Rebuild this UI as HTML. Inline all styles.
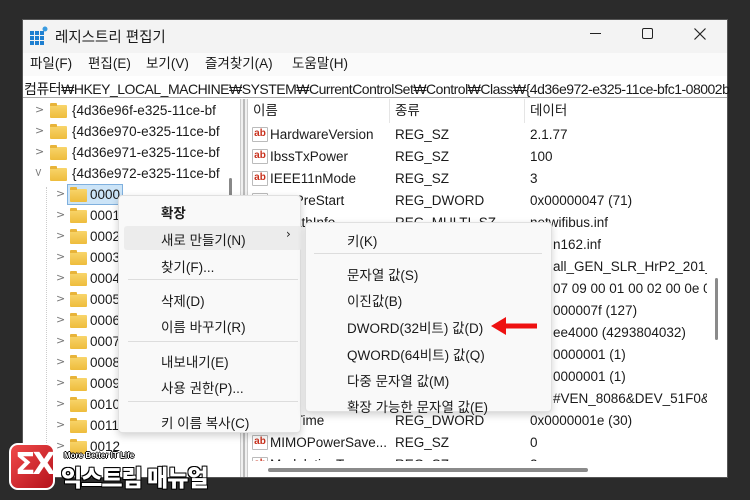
<!DOCTYPE html>
<html><head><meta charset="utf-8"><style>
*{margin:0;padding:0;box-sizing:border-box}
body{width:750px;height:500px;background:#2b2b2b;position:relative;overflow:hidden;font-family:"Liberation Sans","Noto Sans CJK KR",sans-serif;color:#1a1a1a}
.a{position:absolute;white-space:nowrap}
.t{font-size:13.5px;line-height:16px}
.fold{position:absolute;width:17px;height:13px;background:linear-gradient(#f8d56b,#eebc3c);border-radius:1px}
.fold:before{content:"";position:absolute;left:0;top:-2px;width:7px;height:3px;background:#e8b43a;border-radius:1px 1px 0 0}
.chev{position:absolute;font-size:11px;color:#777;font-family:"DejaVu Sans",sans-serif}
.ab{position:absolute;width:16px;height:15px;border:1px solid #bbb;background:#fff;color:#c8301c;font-size:10px;font-weight:bold;line-height:11px;text-align:center;border-radius:1px}
.ab.d{color:#2a4fb5;font-size:8px}
.m{position:absolute;font-size:13.5px;white-space:nowrap}
.sep{position:absolute;height:1px;background:#ddd}
</style></head><body>
<div class="a" style="left:22px;top:19px;width:706px;height:459px;background:#fff;border:1px solid #555"></div>
<div class="a" style="left:23px;top:20px;width:704px;height:33px;background:#f3f3f3"></div>
<div class="a" style="left:23px;top:53px;width:704px;height:23px;background:#fafafa"></div>
<svg class="a" style="left:30px;top:26px" width="18" height="20" viewBox="0 0 18 20"><g fill="#1e7fd0"><rect x="0" y="5" width="4" height="4"/><rect x="5" y="5" width="4" height="4"/><rect x="10" y="5" width="4" height="4"/><rect x="0" y="10" width="4" height="4"/><rect x="5" y="10" width="4" height="4"/><rect x="10" y="10" width="4" height="4"/><rect x="0" y="15" width="4" height="4"/><rect x="5" y="15" width="4" height="4"/><rect x="10" y="15" width="4" height="4"/></g><circle cx="15" cy="3" r="2.5" fill="#3a9be0"/></svg>
<div class="a" style="left:55px;top:26px;font-size:14.5px">레지스트리 편집기</div>
<div class="a" style="left:590px;top:33px;width:11px;height:1px;background:#222"></div>
<div class="a" style="left:642px;top:28px;width:11px;height:11px;border:1.3px solid #222;border-radius:2px"></div>
<svg class="a" style="left:694px;top:28px" width="12" height="12"><path d="M0.5 0.5L11.5 11.5M11.5 0.5L0.5 11.5" stroke="#222" stroke-width="1.2"/></svg>
<div class="a t" style="left:30px;top:56px">파일(F)</div>
<div class="a t" style="left:88px;top:56px">편집(E)</div>
<div class="a t" style="left:146px;top:56px">보기(V)</div>
<div class="a t" style="left:205px;top:56px">즐겨찾기(A)</div>
<div class="a t" style="left:292px;top:56px">도움말(H)</div>
<div class="a" style="left:23px;top:77px;width:704px;height:21px;border-bottom:1px solid #aaa;background:#fff"></div>
<div class="a" style="left:24px;top:79px;font-size:14px;letter-spacing:-0.5px">컴퓨터₩HKEY_LOCAL_MACHINE₩SYSTEM₩CurrentControlSet₩Control₩Class₩{4d36e972-e325-11ce-bfc1-08002b</div>
<div class="a" style="left:23px;top:99px;width:199px;height:378px;overflow:hidden">
 <div class="chev" style="left:12px;top:4px">&gt;</div><div class="fold" style="left:27px;top:6px"></div><div class="a t" style="left:49px;top:4px">{4d36e96f-e325-11ce-bf</div>
 <div class="chev" style="left:12px;top:25px">&gt;</div><div class="fold" style="left:27px;top:27px"></div><div class="a t" style="left:49px;top:25px">{4d36e970-e325-11ce-bf</div>
 <div class="chev" style="left:12px;top:46px">&gt;</div><div class="fold" style="left:27px;top:48px"></div><div class="a t" style="left:49px;top:46px">{4d36e971-e325-11ce-bf</div>
 <div class="chev" style="left:11px;top:67px;transform:rotate(90deg)">&gt;</div><div class="fold" style="left:27px;top:69px"></div><div class="a t" style="left:49px;top:67px">{4d36e972-e325-11ce-bf</div>
 <div class="a" style="left:23px;top:88px;width:3px;height:290px;border-left:1px dotted #ccc"></div>
 <div class="a" style="left:44px;top:85px;width:56px;height:21px;background:#cce4f7;border:1px solid #7fb0de"></div>
 <div class="chev" style="left:33px;top:88px">&gt;</div><div class="fold" style="left:47px;top:90px"></div><div class="a t" style="left:67px;top:88px">0000</div>
 <div class="chev" style="left:33px;top:109px">&gt;</div><div class="fold" style="left:47px;top:111px"></div><div class="a t" style="left:67px;top:109px">0001</div>
 <div class="chev" style="left:33px;top:130px">&gt;</div><div class="fold" style="left:47px;top:132px"></div><div class="a t" style="left:67px;top:130px">0002</div>
 <div class="chev" style="left:33px;top:151px">&gt;</div><div class="fold" style="left:47px;top:153px"></div><div class="a t" style="left:67px;top:151px">0003</div>
 <div class="chev" style="left:33px;top:172px">&gt;</div><div class="fold" style="left:47px;top:174px"></div><div class="a t" style="left:67px;top:172px">0004</div>
 <div class="chev" style="left:33px;top:193px">&gt;</div><div class="fold" style="left:47px;top:195px"></div><div class="a t" style="left:67px;top:193px">0005</div>
 <div class="chev" style="left:33px;top:214px">&gt;</div><div class="fold" style="left:47px;top:216px"></div><div class="a t" style="left:67px;top:214px">0006</div>
 <div class="chev" style="left:33px;top:235px">&gt;</div><div class="fold" style="left:47px;top:237px"></div><div class="a t" style="left:67px;top:235px">0007</div>
 <div class="chev" style="left:33px;top:256px">&gt;</div><div class="fold" style="left:47px;top:258px"></div><div class="a t" style="left:67px;top:256px">0008</div>
 <div class="chev" style="left:33px;top:277px">&gt;</div><div class="fold" style="left:47px;top:279px"></div><div class="a t" style="left:67px;top:277px">0009</div>
 <div class="chev" style="left:33px;top:298px">&gt;</div><div class="fold" style="left:47px;top:300px"></div><div class="a t" style="left:67px;top:298px">0010</div>
 <div class="chev" style="left:33px;top:319px">&gt;</div><div class="fold" style="left:47px;top:321px"></div><div class="a t" style="left:67px;top:319px">0011</div>
 <div class="chev" style="left:33px;top:340px">&gt;</div><div class="fold" style="left:47px;top:342px"></div><div class="a t" style="left:67px;top:340px">0012</div>
</div>
<div class="a" style="left:229px;top:178px;width:3px;height:22px;background:#888;border-radius:2px"></div>
<div class="a" style="left:240px;top:99px;width:8px;height:378px;background:#f0f0f0;border-left:1px solid #ccc;border-right:1px solid #ccc"></div>
<div class="a" style="left:243px;top:99px;width:2px;height:378px;background:#bbb"></div>
<div class="a" style="left:248px;top:99px;width:459px;height:362px;overflow:hidden;background:#fff">
 <div class="a" style="left:141px;top:0;width:1px;height:24px;background:#e5e5e5"></div>
 <div class="a" style="left:276px;top:0;width:1px;height:24px;background:#e5e5e5"></div>
 <div class="a t" style="left:5px;top:4px">이름</div><div class="a t" style="left:147px;top:4px">종류</div><div class="a t" style="left:282px;top:4px">데이터</div>
 <div class="ab" style="left:4px;top:28px">ab</div><div class="a t" style="left:22px;top:28px">HardwareVersion</div><div class="a t" style="left:147px;top:28px">REG_SZ</div><div class="a t" style="left:282px;top:28px">2.1.77</div>
 <div class="ab" style="left:4px;top:50px">ab</div><div class="a t" style="left:22px;top:50px">IbssTxPower</div><div class="a t" style="left:147px;top:50px">REG_SZ</div><div class="a t" style="left:282px;top:50px">100</div>
 <div class="ab" style="left:4px;top:72px">ab</div><div class="a t" style="left:22px;top:72px">IEEE11nMode</div><div class="a t" style="left:147px;top:72px">REG_SZ</div><div class="a t" style="left:282px;top:72px">3</div>
 <div class="ab d" style="left:4px;top:94px">011</div><div class="a t" style="left:22px;top:94px">IbssPreStart</div><div class="a t" style="left:147px;top:94px">REG_DWORD</div><div class="a t" style="left:282px;top:94px">0x00000047 (71)</div>
 <div class="ab" style="left:4px;top:116px">ab</div><div class="a t" style="left:22px;top:116px">InfPathInfo</div><div class="a t" style="left:147px;top:116px">REG_MULTI_SZ</div><div class="a t" style="left:282px;top:116px">netwifibus.inf</div>
 <div class="a t" style="left:305px;top:138px">n162.inf</div>
 <div class="a t" style="left:305px;top:160px">all_GEN_SLR_HrP2_201_AX</div>
 <div class="a t" style="left:305px;top:182px">07 09 00 01 00 02 00 0e 00</div>
 <div class="a t" style="left:305px;top:204px">000007f (127)</div>
 <div class="a t" style="left:305px;top:226px">ee4000 (4293804032)</div>
 <div class="a t" style="left:305px;top:248px">0000001 (1)</div>
 <div class="a t" style="left:305px;top:270px">0000001 (1)</div>
 <div class="a t" style="left:305px;top:292px">#VEN_8086&amp;DEV_51F0&amp;SUBSYS</div>
 <div class="ab d" style="left:4px;top:314px">011</div><div class="a t" style="left:22px;top:314px">LinkTime</div><div class="a t" style="left:147px;top:314px">REG_DWORD</div><div class="a t" style="left:282px;top:314px">0x0000001e (30)</div>
 <div class="ab" style="left:4px;top:336px">ab</div><div class="a t" style="left:22px;top:336px">MIMOPowerSave...</div><div class="a t" style="left:147px;top:336px">REG_SZ</div><div class="a t" style="left:282px;top:336px">0</div>
 <div class="ab" style="left:4px;top:358px">ab</div><div class="a t" style="left:22px;top:358px">ModulationType</div><div class="a t" style="left:147px;top:358px">REG_SZ</div><div class="a t" style="left:282px;top:358px">2</div>
</div>
<div class="a" style="left:248px;top:461px;width:479px;height:16px;background:#fff"></div>
<div class="a" style="left:268px;top:468px;width:320px;height:4px;background:#8a8a8a;border-radius:2px"></div>
<div class="a" style="left:715px;top:278px;width:3px;height:62px;background:#8a8a8a;border-radius:2px"></div>
<div class="a" style="left:118px;top:195px;width:183px;height:238px;background:#f9f9f9;border:1px solid #e0e0e0;box-shadow:0 3px 8px rgba(0,0,0,.18);border-radius:4px"></div>
<div class="a" style="left:124px;top:226px;width:178px;height:24px;background:#ececec;border-radius:3px"></div>
<div class="m" style="left:161px;top:202px;font-weight:bold">확장</div>
<div class="m" style="left:161px;top:229px">새로 만들기(N)</div>
<div class="m" style="left:286px;top:227px;font-family:'DejaVu Sans';font-size:12px">›</div>
<div class="m" style="left:161px;top:256px">찾기(F)...</div>
<div class="sep" style="left:128px;top:279px;width:170px"></div>
<div class="m" style="left:161px;top:290px">삭제(D)</div>
<div class="m" style="left:161px;top:316px">이름 바꾸기(R)</div>
<div class="sep" style="left:128px;top:341px;width:170px"></div>
<div class="m" style="left:161px;top:351px">내보내기(E)</div>
<div class="m" style="left:161px;top:377px">사용 권한(P)...</div>
<div class="sep" style="left:128px;top:401px;width:170px"></div>
<div class="m" style="left:161px;top:412px">키 이름 복사(C)</div>
<div class="a" style="left:305px;top:222px;width:247px;height:190px;background:#f9f9f9;border:1px solid #e0e0e0;box-shadow:0 3px 8px rgba(0,0,0,.18);border-radius:4px"></div>
<div class="m" style="left:347px;top:230px">키(K)</div>
<div class="sep" style="left:314px;top:253px;width:228px"></div>
<div class="m" style="left:347px;top:264px">문자열 값(S)</div>
<div class="m" style="left:347px;top:290px">이진값(B)</div>
<div class="m" style="left:347px;top:317px">DWORD(32비트) 값(D)</div>
<div class="m" style="left:347px;top:344px">QWORD(64비트) 값(Q)</div>
<div class="m" style="left:347px;top:370px">다중 문자열 값(M)</div>
<div class="m" style="left:347px;top:396px">확장 가능한 문자열 값(E)</div>
<svg class="a" style="left:491px;top:316px" width="48" height="20"><path d="M0 10L15 1V7.5H46V12.5H15V19Z" fill="#ee1111"/></svg>
<div class="a" style="left:9px;top:443px;width:46px;height:47px;background:linear-gradient(135deg,#f04a4a,#b5121b);border:2px solid #fff;border-radius:9px"></div>
<div class="a" style="left:15px;top:447px;font-size:30px;font-weight:bold;color:#fff;font-family:'DejaVu Sans',sans-serif;letter-spacing:-3px">ΣX</div>
<div class="a" style="left:64px;top:451px;font-size:8px;font-weight:bold;color:#fff;text-shadow:1px 0 0 #000,-1px 0 0 #000,0 1px 0 #000,0 -1px 0 #000">More Better IT Life</div>
<div class="a" style="left:61px;top:459px;font-size:23px;font-weight:900;color:#fff;letter-spacing:-1px;text-shadow:1px 1px 0 #000,-1px -1px 0 #000,1px -1px 0 #000,-1px 1px 0 #000">익스트림 매뉴얼</div>
</body></html>
